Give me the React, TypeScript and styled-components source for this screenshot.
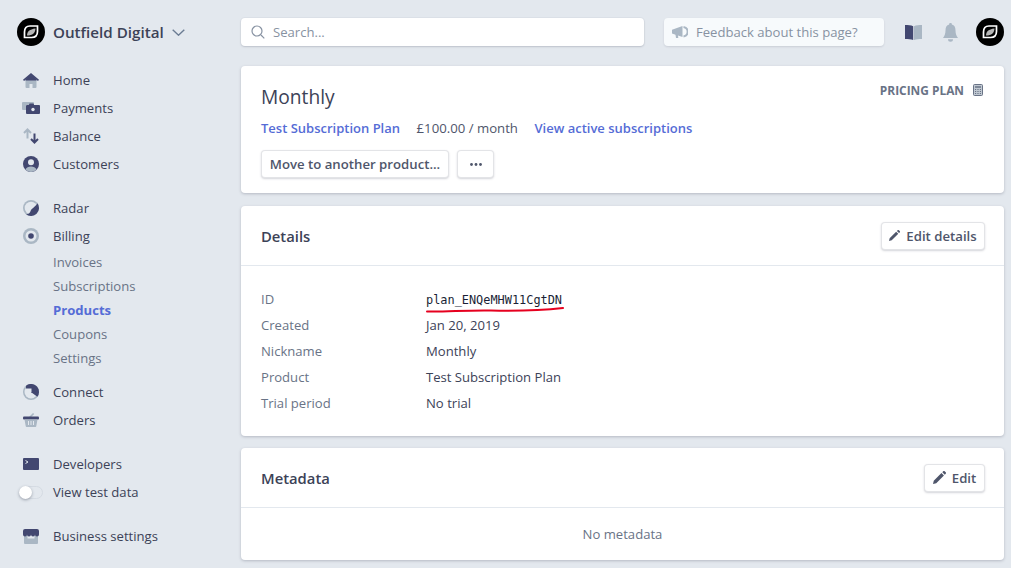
import React from "react";
import styled, { createGlobalStyle } from "styled-components";

const DARK = "#424770";
const LIGHT = "#aab7c4";
const PAGE = "#e3e8ee";

const GlobalStyle = createGlobalStyle`
  html, body {
    margin: 0;
    padding: 0;
    height: 568px;
    overflow: hidden;
    background: ${PAGE};
    font-family: "Open Sans", "Noto Sans", sans-serif;
    font-size: 13.1px;
    color: #3c4257;
  }
  * { box-sizing: border-box; }
`;

const ToggleTrack = styled.div`
  position: relative;
  width: 24px;
  height: 13px;
  border-radius: 7px;
  background: ${PAGE};
  border: 1px solid #d5dbe3;
`;

const ToggleKnob = styled.div`
  position: absolute;
  left: -1px;
  top: -1px;
  width: 13px;
  height: 13px;
  border-radius: 50%;
  background: #fff;
  box-shadow: 0 1px 3px rgba(60, 66, 87, 0.45);
`;

const Logo = () => (
  <svg width="28" height="28" viewBox="0 0 28 28">
    <circle cx="14" cy="14" r="14" fill="#000" />
    <path d="M13 8h7.500v5.500c0 3.800-2.200 6-6 6H7.500V14c0-3.800 1.700-6 5.500-6z" fill="none" stroke="#fff" strokeWidth="1.700" />
    <path d="M10 17.500c0-3.800 2.400-6.200 8.500-7-.3 4.500-2.800 7-8.500 7z" fill="#b8b8b8" />
  </svg>
);

const HomeIcon = () => (
  <svg width="16" height="15" viewBox="0 0 16 15">
    <path d="M2.500 7h11v7a1 1 0 0 1-1 1h-3v-4h-3v4h-3a1 1 0 0 1-1-1z" fill={LIGHT} />
    <path d="M8 0l8 6.800-1 1.200-7-5.800L1 8 0 6.800z" fill={DARK} />
    <path d="M8 1.500l5.500 4.700v1.300h-11V6.200z" fill={DARK} />
  </svg>
);

const PaymentsIcon = () => (
  <svg width="18" height="12" viewBox="0 0 18 12">
    <path d="M0 1a1 1 0 0 1 1-1h10a1 1 0 0 1 1 1v2H4v5H1a1 1 0 0 1-1-1z" fill={LIGHT} />
    <rect x="4" y="3" width="14" height="9" rx="1" fill={DARK} />
    <rect x="7" y="1.500" width="5" height="2" rx="1" fill={DARK} />
    <circle cx="11" cy="7.500" r="1.700" fill={PAGE} />
  </svg>
);

const BalanceIcon = () => (
  <svg width="16" height="16" viewBox="0 0 16 16" fill="none" strokeWidth="2">
    <path d="M4.500 10.500V1.500M1 5l3.500-3.500L8 5" stroke={LIGHT} />
    <path d="M11.500 5.500v9M8 11l3.500 3.500L15 11" stroke={DARK} />
  </svg>
);

const CustomersIcon = () => (
  <svg width="16" height="16" viewBox="0 0 16 16">
    <circle cx="8" cy="8" r="8" fill={DARK} />
    <path d="M2.300 13.600C3.500 11.300 5.500 10.500 8 10.500s4.500.8 5.700 3.100a8 8 0 0 1-11.400 0z" fill={LIGHT} />
    <circle cx="8" cy="6.300" r="3" fill={PAGE} />
  </svg>
);

const RadarIcon = () => (
  <svg width="16" height="16" viewBox="0 0 16 16">
    <circle cx="8" cy="8" r="8" fill={LIGHT} />
    <circle cx="8" cy="8" r="6.300" fill={PAGE} />
    <path d="M14.500 3.300A8 8 0 0 1 3 14.200c3 0 4-1.400 4.600-3.200.8-2.600 4.400-3.600 6.900-7.700z" fill={DARK} />
  </svg>
);

const BillingIcon = () => (
  <svg width="16" height="16" viewBox="0 0 16 16">
    <circle cx="8" cy="8" r="8" fill={LIGHT} />
    <circle cx="8" cy="8" r="5.500" fill={PAGE} />
    <circle cx="8" cy="8" r="2.800" fill={DARK} />
  </svg>
);

const ConnectIcon = () => (
  <svg width="16" height="16" viewBox="0 0 16 16">
    <circle cx="8" cy="8" r="8" fill={LIGHT} />
    <circle cx="8" cy="8" r="6.500" fill={PAGE} />
    <path d="M3 1.800A8 8 0 0 1 16 8a8 8 0 0 1-1.600 4.800L8.500 8.500V4.500H3z" fill={DARK} />
    <path d="M8.500 8.500h7" stroke={DARK} strokeWidth="1" />
  </svg>
);

const OrdersIcon = () => (
  <svg width="16" height="14" viewBox="0 0 16 14">
    <path d="M5.500 4.500L10 0l1.200 1L7.800 4.500z" fill={LIGHT} />
    <rect x="0" y="3.500" width="16" height="3" rx="1" fill={DARK} />
    <path d="M1.500 6.500h13l-1.200 6.500a1 1 0 0 1-1 1H3.700a1 1 0 0 1-1-1z" fill={LIGHT} />
    <path d="M5.500 8v4M8 8v4M10.500 8v4" stroke={PAGE} strokeWidth="1" />
  </svg>
);

const DevelopersIcon = () => (
  <svg width="16" height="12" viewBox="0 0 16 12">
    <rect width="16" height="12" rx="1" fill={DARK} />
    <path d="M2.500 2.500L5 4 2.500 5.500" fill="none" stroke={PAGE} strokeWidth="1" />
  </svg>
);

const BusinessIcon = () => (
  <svg width="16" height="15" viewBox="0 0 16 15">
    <path d="M1 5h14v9a1 1 0 0 1-1 1H2a1 1 0 0 1-1-1z" fill={LIGHT} />
    <rect x="4.500" y="6" width="7" height="3.500" fill={PAGE} />
    <path d="M2 0h12a2 2 0 0 1 2 2v3.500a2 2 0 0 1-4 0 2 2 0 0 1-4 0 2 2 0 0 1-4 0 2 2 0 0 1-4 0V2a2 2 0 0 1 2-2z" fill={DARK} />
  </svg>
);

const SearchIcon = () => (
  <svg width="14" height="14" viewBox="0 0 14 14" fill="none" stroke="#8792a2" strokeWidth="1.200">
    <circle cx="6" cy="6" r="5" />
    <path d="M10 10l3.300 3.300" />
  </svg>
);

const MegaphoneIcon = () => (
  <svg width="16" height="12" viewBox="0 0 16 12">
    <path d="M0 3.800L10.500 0v11L6 9.500l.3 2.500H4l-.5-3.300L0 7.500z" fill={LIGHT} />
    <path d="M11.500 1a4.800 4.800 0 0 1 0 9.500" fill="none" stroke={LIGHT} strokeWidth="2" />
  </svg>
);

const BookIcon = () => (
  <svg width="17" height="15" viewBox="0 0 17 15">
    <path d="M0 0c3 0 6 .2 8.200 1.200V15C6 14 3 14 0 14z" fill={DARK} />
    <path d="M17 0c-3 0-5.800.2-8 1.200V15c2.200-1 5-1 8-1z" fill={LIGHT} />
  </svg>
);

const BellIcon = () => (
  <svg width="15" height="19" viewBox="0 0 15 19">
    <path d="M7.500 0a1.300 1.300 0 0 1 1.300 1.600C11.500 2.300 12.500 4.500 12.500 7.500c0 3.500 1 5.500 2.500 7.500H0c1.500-2 2.500-4 2.500-7.500 0-3 1-5.200 3.700-5.900A1.300 1.300 0 0 1 7.500 0z" fill={LIGHT} />
    <path d="M5 16.300h5a2.500 2.500 0 0 1-5 0z" fill={LIGHT} />
  </svg>
);

const CalculatorIcon = () => (
  <svg width="10" height="12" viewBox="0 0 10 12">
    <rect x=".5" y=".5" width="9" height="11" rx="1" fill="#c1c9d2" stroke="#697386" />
    <path d="M2 3h6" stroke="#697386" strokeWidth="1.500" />
    <path d="M2 5.500h1.200M4.400 5.500h1.200M6.800 5.500H8M2 7.500h1.200M4.400 7.500h1.200M6.800 7.500H8M2 9.500h1.200M4.400 9.500h1.200M6.800 9.500H8" stroke="#697386" />
  </svg>
);

const PencilIcon = ({ size }: { size: number }) => (
  <svg width={size} height={size} viewBox="0 0 12 12">
    <path d="M0 12l.7-3L7.800 1.900l2.300 2.300L3 11.300zM8.600 1.100l.8-.8a1 1 0 0 1 1.400 0l.9.900a1 1 0 0 1 0 1.400l-.8.800z" fill="#4f566b" />
  </svg>
);

const navGroups = [
  {
    gap: 16,
    items: [
      { label: "Home", icon: <HomeIcon /> },
      { label: "Payments", icon: <PaymentsIcon /> },
      { label: "Balance", icon: <BalanceIcon /> },
      { label: "Customers", icon: <CustomersIcon /> },
    ],
  },
  {
    gap: 8,
    items: [
      { label: "Radar", icon: <RadarIcon /> },
      { label: "Billing", icon: <BillingIcon />, subs: ["Invoices", "Subscriptions", "Products", "Coupons", "Settings"] },
    ],
  },
  {
    gap: 16,
    items: [
      { label: "Connect", icon: <ConnectIcon /> },
      { label: "Orders", icon: <OrdersIcon /> },
    ],
  },
  {
    gap: 16,
    items: [
      { label: "Developers", icon: <DevelopersIcon /> },
      { label: "View test data", icon: <ToggleTrack><ToggleKnob /></ToggleTrack> },
    ],
  },
  {
    gap: 0,
    items: [{ label: "Business settings", icon: <BusinessIcon /> }],
  },
];

const details = [
  ["Created", "Jan 20, 2019"],
  ["Nickname", "Monthly"],
  ["Product", "Test Subscription Plan"],
  ["Trial period", "No trial"],
];

export default function App() {
  return (
    <Page>
      <GlobalStyle />
      <Sidebar>
        <Brand>
          <Logo />
          <BrandName>Outfield Digital</BrandName>
          <svg width="13" height="7" viewBox="0 0 13 7" fill="none" stroke="#6b7c93" strokeWidth="1.400">
            <path d="M.7.700l5.800 5.500L12.300.700" />
          </svg>
        </Brand>
        {navGroups.map((group) => (
          <NavGroup key={group.items[0].label} $gap={group.gap}>
            {group.items.map((item) => (
              <React.Fragment key={item.label}>
                <NavRow>
                  <IconSlot>{item.icon}</IconSlot>
                  {item.label}
                </NavRow>
                {"subs" in item &&
                  item.subs?.map((sub) => (
                    <SubRow key={sub} $active={sub === "Products"}>
                      {sub}
                    </SubRow>
                  ))}
              </React.Fragment>
            ))}
          </NavGroup>
        ))}
      </Sidebar>
      <Main>
        <TopBar>
          <SearchBox>
            <SearchIcon />
            Search...
          </SearchBox>
          <FeedbackBox>
            <MegaphoneIcon />
            Feedback about this page?
          </FeedbackBox>
          <TopIcons>
            <BookIcon />
            <BellSlot>
              <BellIcon />
            </BellSlot>
            <Logo />
          </TopIcons>
        </TopBar>
        <Card $height={127} $gap={13}>
          <PlanBody>
            <PlanTop>
              <PlanTitle>Monthly</PlanTitle>
              <PlanKind>
                PRICING PLAN <CalculatorIcon />
              </PlanKind>
            </PlanTop>
            <PlanMeta>
              <PlanLink>Test Subscription Plan</PlanLink>
              <span>£100.00 / month</span>
              <PlanLink>View active subscriptions</PlanLink>
            </PlanMeta>
            <ButtonRow>
              <Button $width={188}>Move to another product...</Button>
              <Button $width={37}>
                <svg width="12" height="3" viewBox="0 0 12 3" fill="#4f566b">
                  <circle cx="1.500" cy="1.500" r="1.400" />
                  <circle cx="6" cy="1.500" r="1.400" />
                  <circle cx="10.500" cy="1.500" r="1.400" />
                </svg>
              </Button>
            </ButtonRow>
          </PlanBody>
        </Card>
        <Card $height={230} $gap={12}>
          <CardHeader>
            <CardTitle>Details</CardTitle>
            <Button $width={104}>
              <PencilIcon size={11} />
              Edit details
            </Button>
          </CardHeader>
          <DetailList>
            <DetailLabel>ID</DetailLabel>
            <DetailValue>
              <PlanId>plan_ENQeMHW11CgtDN</PlanId>
              <Scribble width="138" height="6" viewBox="0 0 138 6" fill="none">
                <path d="M1 4.500C20 5 40 3 65 3.500S110 4 137 1" stroke="#e6001f" strokeWidth="2" strokeLinecap="round" />
              </Scribble>
            </DetailValue>
            {details.map(([label, value]) => (
              <React.Fragment key={label}>
                <DetailLabel>{label}</DetailLabel>
                <DetailValue>{value}</DetailValue>
              </React.Fragment>
            ))}
          </DetailList>
        </Card>
        <Card $height={112} $gap={0}>
          <CardHeader>
            <CardTitle>Metadata</CardTitle>
            <Button $width={61}>
              <PencilIcon size={13} />
              Edit
            </Button>
          </CardHeader>
          <EmptyNote>No metadata</EmptyNote>
        </Card>
      </Main>
    </Page>
  );
}

const Page = styled.div`
  display: flex;
  width: 1011px;
  height: 568px;
  overflow: hidden;
`;

const Sidebar = styled.nav`
  width: 241px;
  flex-shrink: 0;
  padding: 18px 0 0 17px;
`;

const Brand = styled.div`
  display: flex;
  align-items: center;
  height: 28px;
  margin-bottom: 20px;
`;

const BrandName = styled.div`
  font-size: 15.2px;
  font-weight: 600;
  margin: 0 8px;
  color: #3c4257;
`;

const NavGroup = styled.div<{ $gap: number }>`
  margin-bottom: ${(props) => props.$gap}px;
`;

const NavRow = styled.div`
  display: flex;
  align-items: center;
  height: 28px;
  color: #3c4257;
`;

const IconSlot = styled.div`
  display: flex;
  justify-content: center;
  align-items: center;
  width: 28px;
  margin-right: 8px;
`;

const SubRow = styled.div<{ $active?: boolean }>`
  display: flex;
  align-items: center;
  height: 24px;
  padding-left: 36px;
  color: ${({ $active }) => ($active ? "#556cd6" : "#697386")};
  font-weight: ${({ $active }) => ($active ? 700 : 400)};
`;

const Main = styled.main`
  width: 763px;
  flex-shrink: 0;
  padding-top: 18px;
`;

const TopBar = styled.div`
  display: flex;
  align-items: center;
  height: 28px;
  margin-bottom: 20px;
`;

const SearchBox = styled.div`
  display: flex;
  align-items: center;
  gap: 8px;
  width: 403px;
  height: 28px;
  padding-left: 10px;
  border-radius: 4px;
  background: #fff;
  color: #8792a2;
  box-shadow: 0 0 0 1px rgba(60, 66, 87, 0.03), 0 1px 2px rgba(60, 66, 87, 0.2);
`;

const FeedbackBox = styled.div`
  display: flex;
  align-items: center;
  gap: 8px;
  width: 220px;
  height: 28px;
  margin-left: 20px;
  padding-left: 8px;
  border-radius: 4px;
  background: #f7fafc;
  color: #8792a2;
  box-shadow: 0 1px 2px rgba(60, 66, 87, 0.15);
`;

const TopIcons = styled.div`
  display: flex;
  align-items: center;
  gap: 20px;
  margin-left: 21px;
`;

const BellSlot = styled.div`
  display: flex;
  margin: 0 -2px 0 1px;
`;

const Card = styled.section<{ $height: number; $gap: number }>`
  height: ${(props) => props.$height}px;
  margin-bottom: ${(props) => props.$gap}px;
  border-radius: 4px;
  background: #fff;
  box-shadow: 0 1px 3px rgba(60, 66, 87, 0.28);
`;

const PlanBody = styled.div`
  padding: 18px 20px 0;
`;

const PlanTop = styled.div`
  display: flex;
  justify-content: space-between;
  height: 26px;
`;

const PlanTitle = styled.h1`
  margin: 0;
  font-size: 19.2px;
  font-weight: 400;
  line-height: 26px;
  color: #3c4257;
`;

const PlanKind = styled.div`
  display: flex;
  align-items: center;
  gap: 9px;
  height: 12px;
  margin-right: 1px;
  font-size: 11.9px;
  font-weight: 700;
  color: #697386;
`;

const PlanMeta = styled.div`
  display: flex;
  align-items: center;
  gap: 16.5px;
  height: 20px;
  margin-top: 8px;
  font-size: 13.2px;
  color: #4f566b;
`;

const PlanLink = styled.a`
  color: #556cd6;
  font-weight: 600;
  font-size: 13px;
`;

const ButtonRow = styled.div`
  display: flex;
  gap: 8px;
  margin-top: 12px;
`;

const Button = styled.button<{ $width: number }>`
  display: flex;
  align-items: center;
  justify-content: center;
  gap: 6px;
  width: ${(props) => props.$width}px;
  height: 28px;
  padding: 0;
  border: 0;
  border-radius: 4px;
  background: #fff;
  font: inherit;
  font-size: 13.2px;
  font-weight: 600;
  color: #4f566b;
  white-space: nowrap;
  box-shadow: inset 0 0 0 1px rgba(60, 66, 87, 0.14), 0 1px 2px rgba(60, 66, 87, 0.22);
`;

const CardHeader = styled.div`
  display: flex;
  align-items: center;
  justify-content: space-between;
  height: 60px;
  padding: 0 19px 0 20px;
  border-bottom: 1px solid ${PAGE};
`;

const CardTitle = styled.h2`
  margin: 0;
  font-size: 14.8px;
  font-weight: 600;
  color: #3c4257;
`;

const DetailList = styled.div`
  display: grid;
  grid-template-columns: 165px 1fr;
  grid-auto-rows: 26px;
  align-items: center;
  padding: 20px 20px 0;
`;

const DetailLabel = styled.div`
  color: #697386;
`;

const DetailValue = styled.div`
  position: relative;
  color: #3c4257;
`;

const PlanId = styled.span`
  font-family: "DejaVu Sans Mono", monospace;
  font-size: 11.9px;
  color: #1a1f36;
`;

const Scribble = styled.svg`
  position: absolute;
  left: 0;
  top: 17px;
`;

const EmptyNote = styled.div`
  padding-top: 17px;
  text-align: center;
  color: #697386;
`;
